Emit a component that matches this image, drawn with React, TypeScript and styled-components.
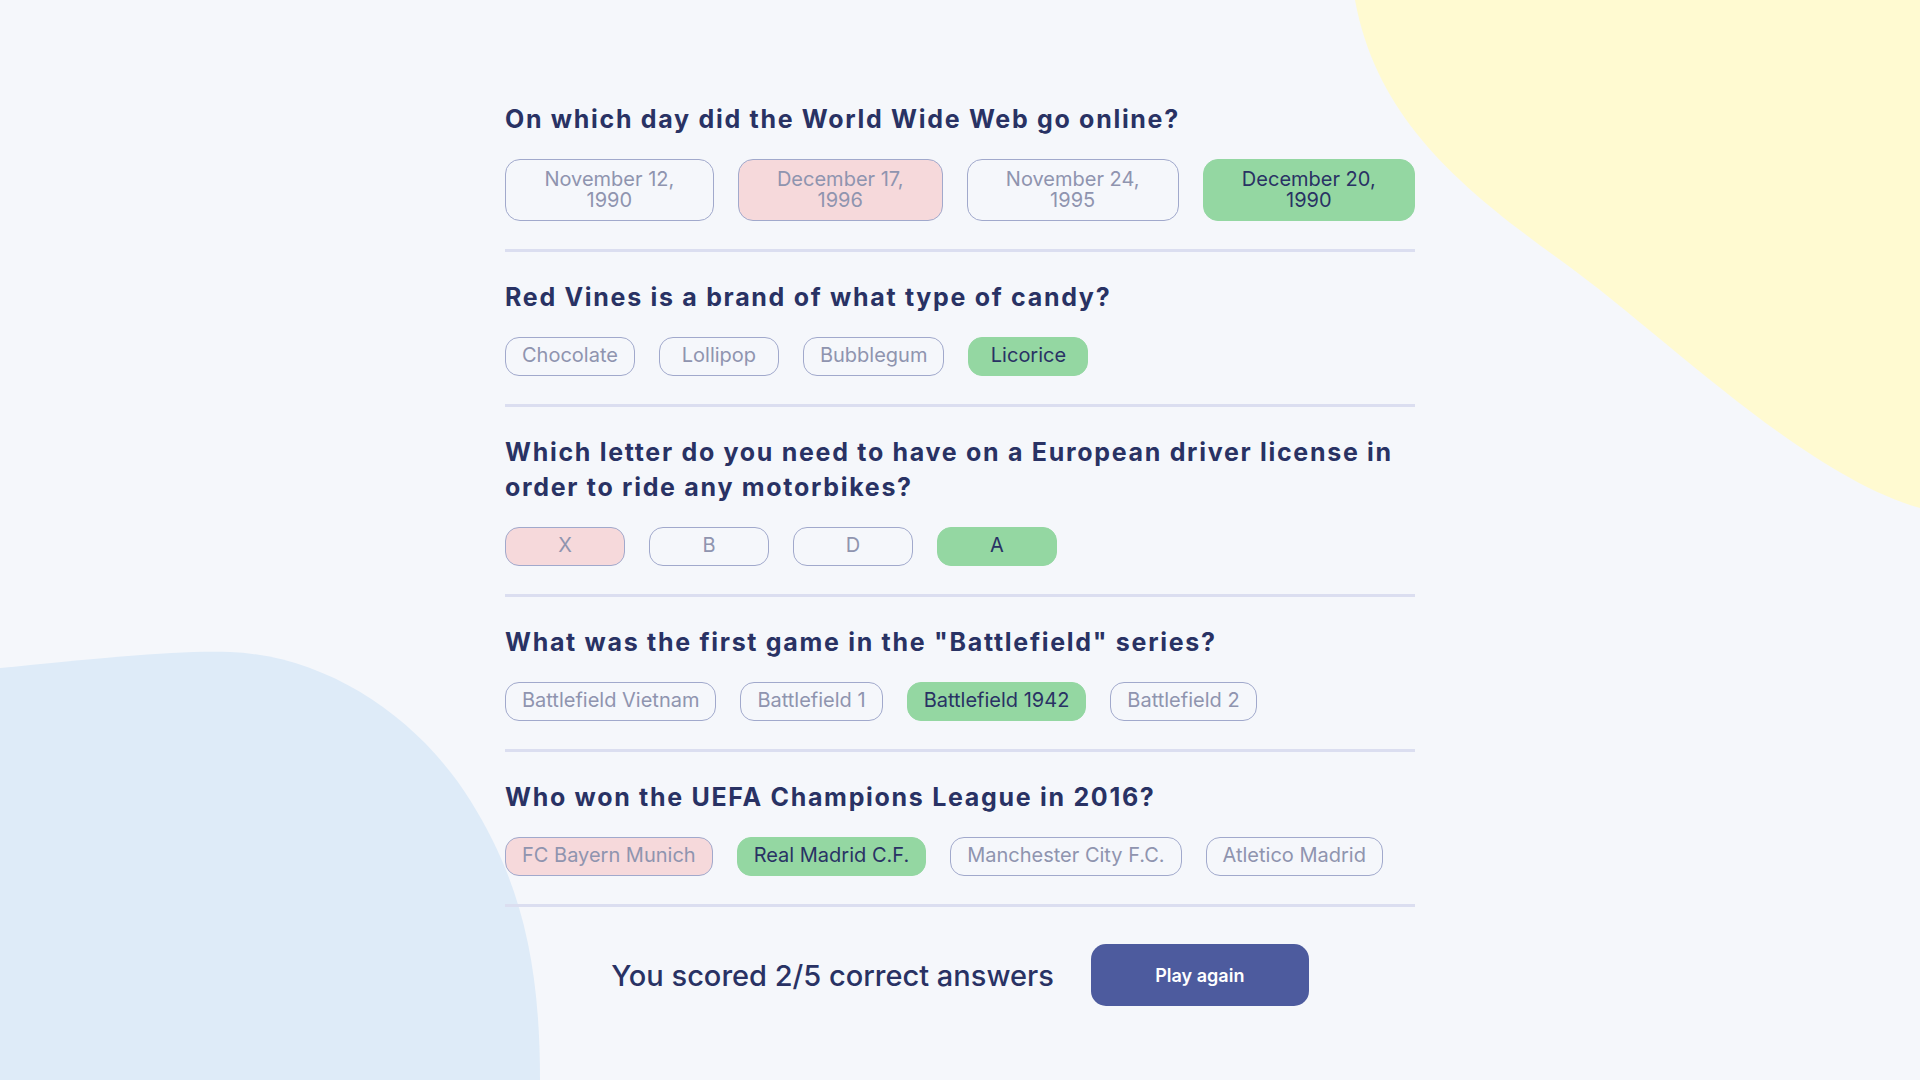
import React from "react";
import styled, { createGlobalStyle, css } from "styled-components";

const GlobalStyle = createGlobalStyle`
  * { box-sizing: border-box; }
  html, body { margin: 0; padding: 0; }
  body {
    background: #F5F7FB;
    font-family: Inter, "Noto Sans", sans-serif;
    color: #293264;
  }
`;

type State = "idle" | "wrong" | "correct";

interface QuizItem {
  question: string;
  answers: { text: string; state: State }[];
  wrap?: boolean;
}

const quiz: QuizItem[] = [
  {
    question: "On which day did the World Wide Web go online?",
    wrap: true,
    answers: [
      { text: "November 12, 1990", state: "idle" },
      { text: "December 17, 1996", state: "wrong" },
      { text: "November 24, 1995", state: "idle" },
      { text: "December 20, 1990", state: "correct" },
    ],
  },
  {
    question: "Red Vines is a brand of what type of candy?",
    answers: [
      { text: "Chocolate", state: "idle" },
      { text: "Lollipop", state: "idle" },
      { text: "Bubblegum", state: "idle" },
      { text: "Licorice", state: "correct" },
    ],
  },
  {
    question:
      "Which letter do you need to have on a European driver license in order to ride any motorbikes?",
    answers: [
      { text: "X", state: "wrong" },
      { text: "B", state: "idle" },
      { text: "D", state: "idle" },
      { text: "A", state: "correct" },
    ],
  },
  {
    question: 'What was the first game in the "Battlefield" series?',
    answers: [
      { text: "Battlefield Vietnam", state: "idle" },
      { text: "Battlefield 1", state: "idle" },
      { text: "Battlefield 1942", state: "correct" },
      { text: "Battlefield 2", state: "idle" },
    ],
  },
  {
    question: "Who won the UEFA Champions League in 2016?",
    answers: [
      { text: "FC Bayern Munich", state: "wrong" },
      { text: "Real Madrid C.F.", state: "correct" },
      { text: "Manchester City F.C.", state: "idle" },
      { text: "Atletico Madrid", state: "idle" },
    ],
  },
];

const Page = styled.main`
  position: relative;
  min-height: 100vh;
  overflow: hidden;
  padding: 102px 0 74px;
`;

const YellowBlob = styled.svg`
  position: absolute;
  top: 0;
  right: 0;
  width: 567px;
  height: 508px;
  z-index: 0;
`;

const BlueBlob = styled.svg`
  position: absolute;
  left: 0;
  bottom: 0;
  width: 540px;
  height: 430px;
  z-index: 0;
`;

const Content = styled.div`
  position: relative;
  z-index: 1;
  width: 910px;
  margin: 0 auto;
  display: flex;
  flex-direction: column;
`;

const Question = styled.section`
  padding: 28px 0;
  border-bottom: 3px solid #dbdef0;

  &:first-child {
    padding-top: 0;
  }
`;

const Title = styled.h2`
  margin: 0 0 22px;
  font-family: Inter, "Noto Sans", sans-serif;
  font-weight: 700;
  font-size: 25px;
  letter-spacing: 1.7px;
  line-height: 35px;
  color: #293264;
`;

const Answers = styled.div`
  display: flex;
  gap: 24px;
`;

const Answer = styled.button<{ $state: State; $wrap?: boolean }>`
  min-width: 120px;
  padding: 7px 16px 9px;
  border-radius: 14px;
  border: 1px solid #a1a9cc;
  background: transparent;
  color: #8f94af;
  font-family: Inter, "Noto Sans", sans-serif;
  font-size: 20px;
  line-height: 21px;
  font-weight: 400;
  text-align: center;
  cursor: pointer;

  ${(p) =>
    p.$wrap &&
    css`
      flex: 0 1 auto;
      padding: 9px 16px;
      border-radius: 15px;
    `}

  ${(p) =>
    p.$state === "wrong" &&
    css`
      background: #f6d9db;
    `}

  ${(p) =>
    p.$state === "correct" &&
    css`
      background: #94d7a2;
      border-color: #94d7a2;
      color: #293264;
    `}
`;

const Footer = styled.div`
  display: flex;
  justify-content: center;
  align-items: center;
  gap: 37px;
  margin-top: 37px;
`;

const Score = styled.p`
  margin: 0;
  font-family: Inter, "Noto Sans", sans-serif;
  font-size: 29px;
  font-weight: 500;
  color: #293264;
`;

const PlayButton = styled.button`
  width: 218px;
  height: 62px;
  border: none;
  border-radius: 15px;
  background: #4d5b9e;
  color: #ffffff;
  font-family: Inter, "Noto Sans", sans-serif;
  font-size: 18px;
  font-weight: 600;
  cursor: pointer;
`;

export default function App() {
  return (
    <>
      <GlobalStyle />
      <Page>
        <YellowBlob viewBox="0 0 567 508" aria-hidden>
          <path
            d="M2,0 C24,120 110,190 210,262 S450,475 567,508 L567,0 Z"
            fill="#FFFAD1"
          />
        </YellowBlob>
        <BlueBlob viewBox="0 0 540 430" aria-hidden>
          <path
            d="M0,18 C100,8 180,0 230,2 C330,6 420,70 470,150 C520,230 540,310 540,430 L0,430 Z"
            fill="#DEEBF8"
          />
        </BlueBlob>
        <Content>
          {quiz.map((q) => (
            <Question key={q.question}>
              <Title>{q.question}</Title>
              <Answers>
                {q.answers.map((a) => (
                  <Answer key={a.text} $state={a.state} $wrap={q.wrap}>
                    {a.text}
                  </Answer>
                ))}
              </Answers>
            </Question>
          ))}
          <Footer>
            <Score>You scored 2/5 correct answers</Score>
            <PlayButton>Play again</PlayButton>
          </Footer>
        </Content>
      </Page>
    </>
  );
}
